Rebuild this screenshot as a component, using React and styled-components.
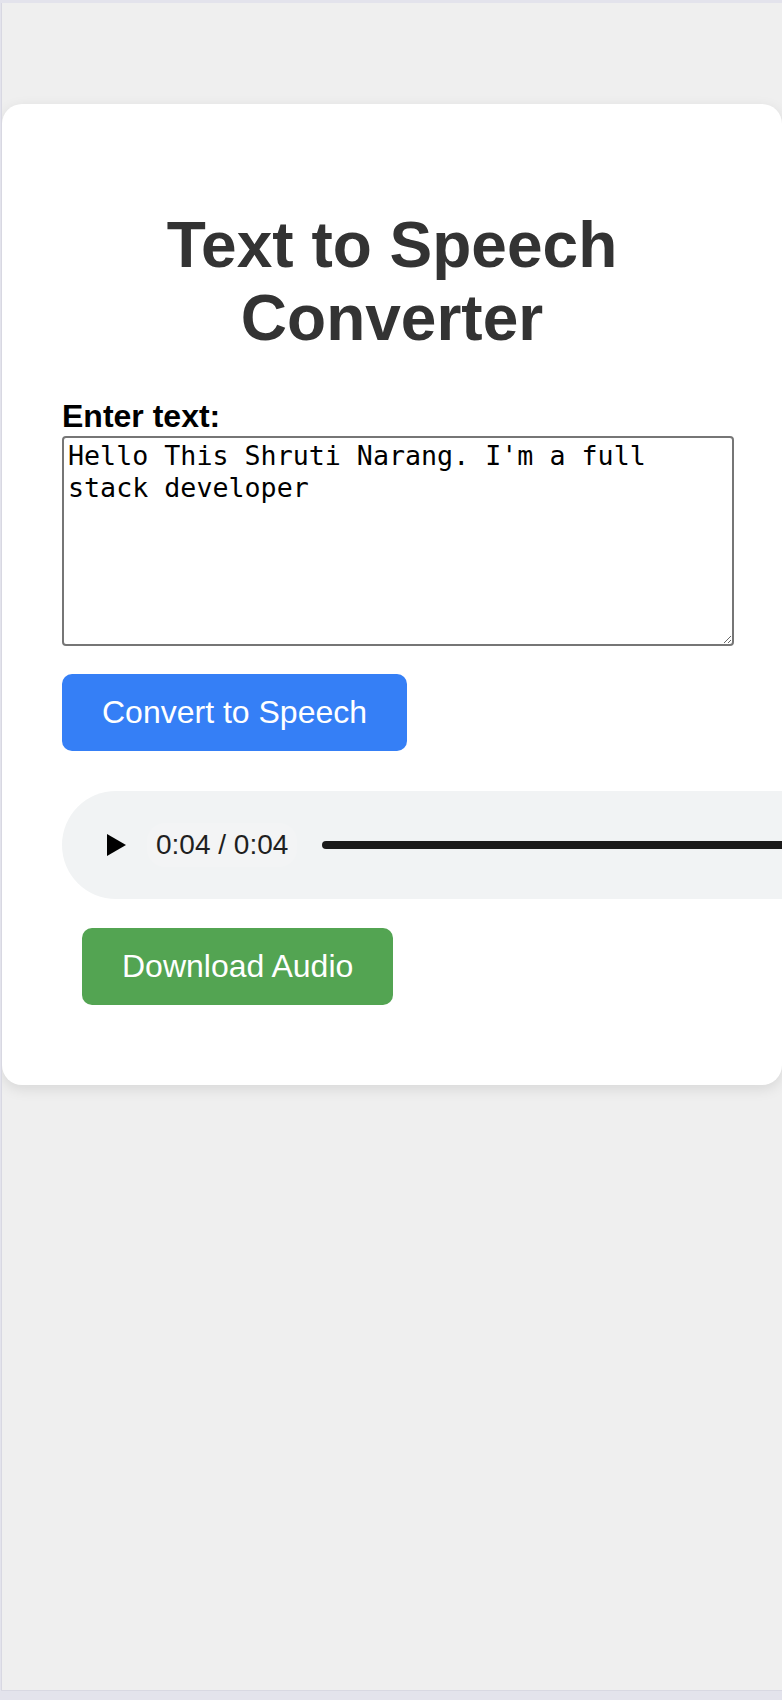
import React from "react";
import styled, { createGlobalStyle } from "styled-components";

const GlobalStyle = createGlobalStyle`
  html, body {
    margin: 0;
    padding: 0;
  }
  body {
    background: #e3e3ec;
    font-family: "Liberation Sans", Arial, Helvetica, sans-serif;
    overflow: hidden;
  }
`;

const Frame = styled.div`
  margin: 3px 0 0 1px;
  height: 1688px;
  padding-top: 101px;
  box-sizing: border-box;
  background: #efefef;
  border-left: 1px solid #d8d8e2;
  border-bottom: 1px solid #d8d8e2;
  overflow: hidden;
`;

const Card = styled.div`
  background: #ffffff;
  border-radius: 20px;
  padding: 60px;
  box-shadow: 0 4px 14px rgba(0, 0, 0, 0.1);
  overflow: hidden;
`;

const Title = styled.h1`
  margin: 45px 0 43px;
  font-size: 64px;
  line-height: 73px;
  font-weight: 700;
  color: #333333;
  text-align: center;
`;

const Label = styled.label`
  display: block;
  margin-bottom: 1px;
  font-size: 32px;
  font-weight: 700;
  color: #000000;
`;

const TextArea = styled.textarea`
  display: block;
  box-sizing: content-box;
  width: 100%;
  height: 198px;
  margin: 0;
  padding: 2px 4px 6px;
  border: 2px solid #767676;
  border-radius: 4px;
  font-family: "DejaVu Sans Mono", "Liberation Mono", monospace;
  font-size: 26.67px;
  line-height: 32px;
  color: #000000;
  background: #ffffff;
`;

const Button = styled.button`
  display: block;
  width: fit-content;
  margin: ${(props) => props.$margin};
  padding: 20px 40px;
  border: none;
  border-radius: 10px;
  background: ${(props) => props.$bg};
  color: #ffffff;
  font-family: "Liberation Sans", Arial, Helvetica, sans-serif;
  font-size: 32px;
  line-height: normal;
  cursor: pointer;
`;

const Player = styled.div`
  display: flex;
  align-items: center;
  width: calc(100% + 120px);
  height: 108px;
  margin-top: 40px;
  padding-left: 45px;
  box-sizing: border-box;
  border-radius: 54px;
  background: #f1f3f4;
`;

const PlayIcon = styled.svg`
  flex: none;
  width: 19px;
  height: 22px;
  margin-right: 21px;
`;

const Time = styled.span`
  flex: none;
  padding: 6px 9px;
  border-radius: 18px;
  background: #f3f4f5;
  font-family: "Liberation Sans", Arial, sans-serif;
  font-size: 28px;
  color: #1f1f1f;
`;

const Track = styled.div`
  flex: 1;
  height: 8px;
  margin-left: 25px;
  border-radius: 4px 0 0 4px;
  background: #1a1a1a;
`;

export default function App() {
  return (
    <>
      <GlobalStyle />
      <Frame>
        <Card>
          <Title>
            Text to Speech
            <br />
            Converter
          </Title>
          <Label htmlFor="tts-text">Enter text:</Label>
          <TextArea
            id="tts-text"
            defaultValue="Hello This Shruti Narang. I'm a full stack developer"
          />
          <Button $bg="#357ff6" $margin="28px 0 0 0">
            Convert to Speech
          </Button>
          <Player>
            <PlayIcon viewBox="0 0 19 22">
              <path d="M0 0 L19 11 L0 22 Z" fill="#000000" />
            </PlayIcon>
            <Time>0:04 / 0:04</Time>
            <Track />
          </Player>
          <Button $bg="#53a452" $margin="29px 0 20px 20px">
            Download Audio
          </Button>
        </Card>
      </Frame>
    </>
  );
}
